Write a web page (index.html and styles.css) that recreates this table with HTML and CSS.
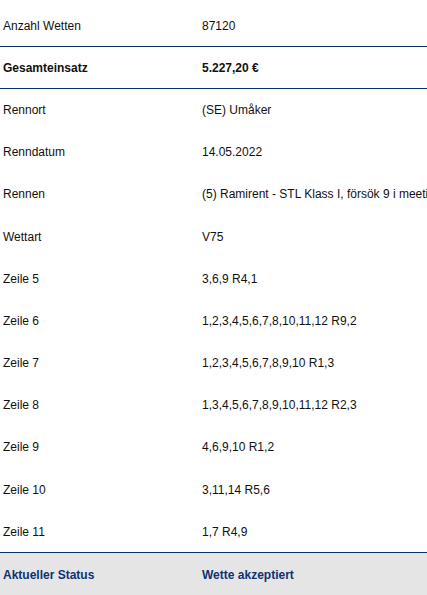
FILE: index.html
```html
<!DOCTYPE html>
<html lang="de">
<head>
<meta charset="utf-8">
<title>Wettdetails</title>
<link rel="stylesheet" href="styles.css">
</head>
<body>
<div class="table">
  <div class="row line"><div class="cell">Anzahl Wetten</div><div class="cell">87120</div></div>
  <div class="row line bold"><div class="cell">Gesamteinsatz</div><div class="cell">5.227,20 €</div></div>
  <div class="row mid"><div class="cell">Rennort</div><div class="cell">(SE) Umåker</div></div>
  <div class="row mid"><div class="cell">Renndatum</div><div class="cell">14.05.2022</div></div>
  <div class="row mid"><div class="cell">Rennen</div><div class="cell">(5) Ramirent - STL Klass I, försök 9 i meeting 3</div></div>
  <div class="row mid"><div class="cell">Wettart</div><div class="cell">V75</div></div>
  <div class="row mid"><div class="cell">Zeile 5</div><div class="cell">3,6,9 R4,1</div></div>
  <div class="row mid"><div class="cell">Zeile 6</div><div class="cell">1,2,3,4,5,6,7,8,10,11,12 R9,2</div></div>
  <div class="row mid"><div class="cell">Zeile 7</div><div class="cell">1,2,3,4,5,6,7,8,9,10 R1,3</div></div>
  <div class="row mid"><div class="cell">Zeile 8</div><div class="cell">1,3,4,5,6,7,8,9,10,11,12 R2,3</div></div>
  <div class="row mid"><div class="cell">Zeile 9</div><div class="cell">4,6,9,10 R1,2</div></div>
  <div class="row mid"><div class="cell">Zeile 10</div><div class="cell">3,11,14 R5,6</div></div>
  <div class="row mid line"><div class="cell">Zeile 11</div><div class="cell">1,7 R4,9</div></div>
  <div class="row status bold"><div class="cell">Aktueller Status</div><div class="cell">Wette akzeptiert</div></div>
</div>
</body>
</html>
```

FILE: styles.css
```css
html, body {
  margin: 0;
  padding: 0;
  background: #ffffff;
}
body {
  font-family: "Liberation Sans", Arial, sans-serif;
  font-size: 12px;
  color: #111111;
  overflow: hidden;
}
.table {
  padding-top: 5px;
  width: 427px;
  overflow: hidden;
}
.row {
  display: grid;
  grid-template-columns: 199px 1fr;
  align-items: center;
  height: 42px;
  box-sizing: border-box;
  border-bottom: 1px solid transparent;
}
.row.mid {
  height: 42.18px;
}
.row.line {
  border-bottom-color: #0b3068;
}
.cell {
  padding-left: 3px;
  padding-top: 1px;
  white-space: nowrap;
  overflow: hidden;
  line-height: 14px;
}
.bold {
  font-weight: bold;
}
.status {
  background: #e5e5e5;
  color: #0e3272;
  border-bottom: none;
  height: 43px;
}
```
